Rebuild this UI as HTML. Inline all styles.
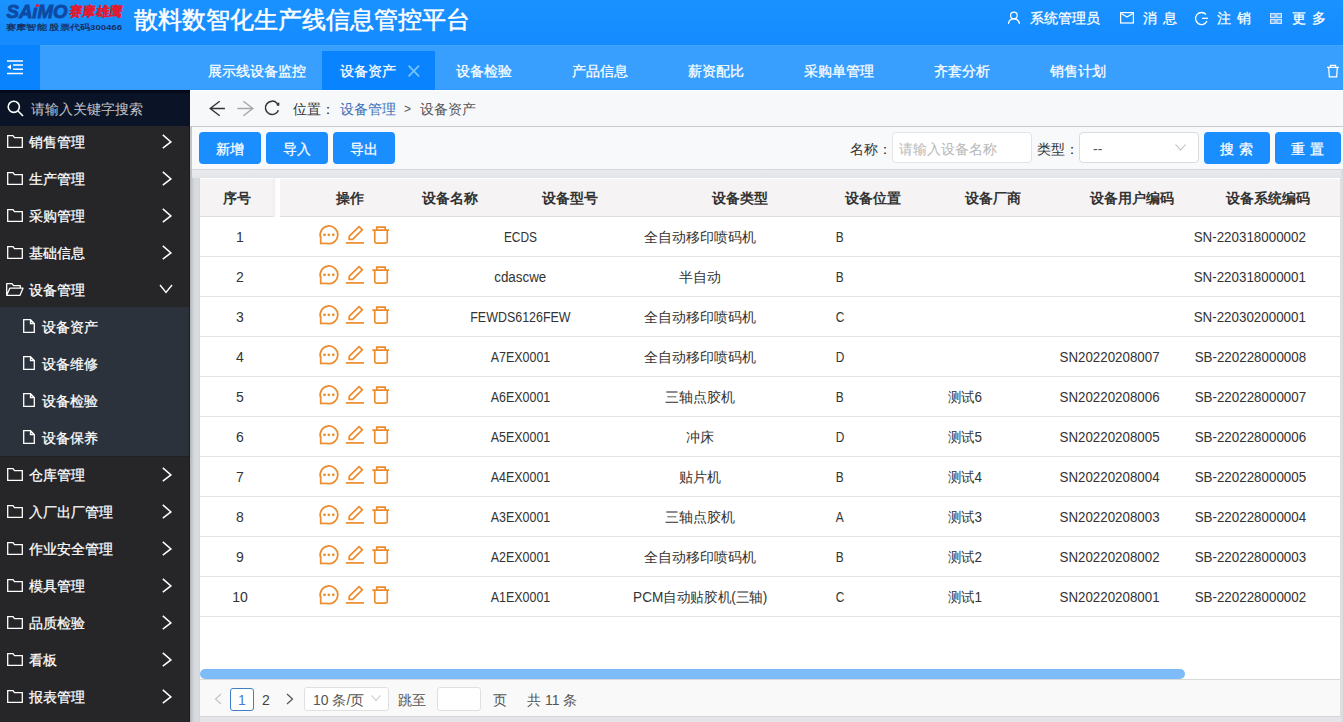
<!DOCTYPE html>
<html><head><meta charset="utf-8"><style>
*{box-sizing:border-box;margin:0;padding:0}
html,body{width:1343px;height:722px;overflow:hidden;background:#e4e5e8;font-family:"Liberation Sans",sans-serif;font-size:14px;color:#333}
.a{position:absolute;white-space:nowrap}
svg{position:absolute;overflow:visible}
.w{color:#fff}
.a{-webkit-text-stroke:0.25px currentColor}
.c{text-align:center}
</style></head><body>
<div class="a" style="left:0px;top:0px;width:1343px;height:45px;background:linear-gradient(#1a92ff,#148bff)"></div>
<div class="a" style="left:0px;top:43px;width:1343px;height:1px;background:#1a8cf6"></div>
<svg style="left:0px;top:0px;" width="130" height="35" viewBox="0 0 130 35"><text x="6.5" y="18" textLength="61" lengthAdjust="spacingAndGlyphs" font-family="Liberation Sans" font-weight="bold" font-style="italic" font-size="19" fill="#0d4aa3" stroke="#0d4aa3" stroke-width="0.9">SAıMO</text><circle cx="37.3" cy="5.6" r="1.7" fill="#e3173a"/><text x="69" y="16.3" textLength="53" lengthAdjust="spacingAndGlyphs" font-family="Liberation Sans" font-weight="bold" font-size="13.5" fill="#e01a2e" stroke="#e01a2e" stroke-width="0.15" transform="skewX(-6) translate(1.8 0)">赛摩雄鹰</text><text x="6" y="30" textLength="116" lengthAdjust="spacingAndGlyphs" font-family="Liberation Sans" font-weight="bold" font-size="7.5" fill="#17305f">赛摩智能  股票代码300466</text></svg>
<div class="a" style="left:134px;top:4.5px;line-height:30px;font-size:24px;color:#fff;-webkit-text-stroke:0.5px #fff">散料数智化生产线信息管控平台</div>
<svg style="left:1007px;top:11px;" width="14" height="14" viewBox="0 0 14 14"><circle cx="6.9" cy="4.4" r="3.3" fill="none" stroke="#fff" stroke-width="1.25"/><path d="M1.4 12.8 C1.9 9.6 4.2 7.9 6.9 7.9 C9.6 7.9 11.9 9.6 12.6 12.8" fill="none" stroke="#fff" stroke-width="1.25"/></svg>
<div class="a" style="left:1030px;top:8.0px;line-height:20px;font-size:14px;color:#fff">系统管理员</div>
<svg style="left:1120px;top:11.5px;" width="14" height="12" viewBox="0 0 14 12"><rect x="0.6" y="0.6" width="12.8" height="10.4" fill="none" stroke="#fff" stroke-width="1.2"/><path d="M1.2 1.6 L7 5 L12.8 1.6" fill="none" stroke="#fff" stroke-width="1.2"/></svg>
<div class="a" style="left:1143px;top:8.0px;line-height:20px;font-size:14px;color:#fff;letter-spacing:1px">消 息</div>
<svg style="left:1195px;top:12px;" width="14" height="13" viewBox="0 0 14 13"><path d="M11 2.5 A6 6 0 1 0 12 9" fill="none" stroke="#fff" stroke-width="1.3"/><path d="M7 6.3 H13" stroke="#fff" stroke-width="1.3"/></svg>
<div class="a" style="left:1217px;top:8.0px;line-height:20px;font-size:14px;color:#fff;letter-spacing:1px">注 销</div>
<svg style="left:1270px;top:13px;" width="12" height="11" viewBox="0 0 12 11"><g fill="#5aa8f5" stroke="#d2e7ff" stroke-width="1.2"><rect x="0.6" y="0.6" width="4.6" height="3.9"/><rect x="6.8" y="0.6" width="4.6" height="3.9"/><rect x="0.6" y="6.5" width="4.6" height="3.9"/><rect x="6.8" y="6.5" width="4.6" height="3.9"/></g></svg>
<div class="a" style="left:1292px;top:8.0px;line-height:20px;font-size:14px;color:#fff;letter-spacing:1px">更 多</div>
<div class="a" style="left:0px;top:45px;width:1343px;height:45px;background:#389fff"></div>
<div class="a" style="left:0px;top:45px;width:1343px;height:1px;background:#3fa5ff"></div>
<div class="a" style="left:0px;top:45px;width:40px;height:45px;background:#0a84fe"></div>
<svg style="left:6px;top:60px;" width="18" height="15" viewBox="0 0 18 15"><path d="M1 1 H17 M7 5 H17 M7 9.2 H17 M1 13.6 H17" stroke="#fff" stroke-width="1.5"/><path d="M1 7.1 L5 4.6 V9.6 Z" fill="#fff"/></svg>
<div class="a" style="left:322px;top:51px;width:113px;height:39px;background:#0a83ff"></div>
<div class="a" style="left:40px;top:89px;width:282px;height:1px;background:#3399fa"></div>
<div class="a" style="left:435px;top:89px;width:908px;height:1px;background:#3399fa"></div>
<div class="a" style="left:208px;top:61.0px;line-height:20px;font-size:14px;color:#fff">展示线设备监控</div>
<div class="a" style="left:340px;top:61.0px;line-height:20px;font-size:14px;color:#fff">设备资产</div>
<div class="a" style="left:456px;top:61.0px;line-height:20px;font-size:14px;color:#fff">设备检验</div>
<div class="a" style="left:572px;top:61.0px;line-height:20px;font-size:14px;color:#fff">产品信息</div>
<div class="a" style="left:688px;top:61.0px;line-height:20px;font-size:14px;color:#fff">薪资配比</div>
<div class="a" style="left:804px;top:61.0px;line-height:20px;font-size:14px;color:#fff">采购单管理</div>
<div class="a" style="left:934px;top:61.0px;line-height:20px;font-size:14px;color:#fff">齐套分析</div>
<div class="a" style="left:1050px;top:61.0px;line-height:20px;font-size:14px;color:#fff">销售计划</div>
<svg style="left:408px;top:65px;" width="12" height="12" viewBox="0 0 12 12"><path d="M0.6 0.6 L11 11.4 M11 0.6 L0.6 11.4" stroke="#78c4ff" stroke-width="1.7"/></svg>
<svg style="left:1327px;top:64px;" width="12" height="14" viewBox="0 0 12 14"><path d="M0 3.3 H12 M3.4 3.3 V1.3 H8.6 V3.3 M1.7 3.3 L2.3 12.8 H9.7 L10.3 3.3" fill="none" stroke="#fff" stroke-width="1.25"/></svg>
<div class="a" style="left:0px;top:90px;width:190px;height:632px;background:#262628"></div>
<div class="a" style="left:189px;top:90px;width:1px;height:632px;background:#1c1c1e"></div>
<div class="a" style="left:0px;top:307px;width:189px;height:149px;background:#2c323c"></div>
<div class="a" style="left:0px;top:456px;width:189px;height:1px;background:#1f2127"></div>
<div class="a" style="left:0px;top:90px;width:190px;height:36px;background:#0a1426"></div>
<div class="a" style="left:0px;top:90px;width:190px;height:3px;background:#050b1a"></div>
<svg style="left:7px;top:100px;" width="17" height="17" viewBox="0 0 17 17"><circle cx="6.8" cy="6.8" r="5.6" fill="none" stroke="#fff" stroke-width="1.6"/><path d="M11 11 L16 16" stroke="#fff" stroke-width="1.6"/></svg>
<div class="a" style="left:31px;top:98.5px;line-height:20px;font-size:14px;color:#c3c4cc;-webkit-text-stroke:0">请输入关键字搜索</div>
<svg style="left:7px;top:135.10000000000002px;" width="16" height="13" viewBox="0 0 16 13"><path d="M0.7 0.7 H6 L7.5 2.7 H15.3 V12.3 H0.7 Z" fill="none" stroke="#fff" stroke-width="1.3"/></svg>
<svg style="left:161.5px;top:134.3px;" width="10" height="15" viewBox="0 0 10 15"><path d="M0.8 0.9 L8.9 7.9 L0.8 14.1" fill="none" stroke="#fff" stroke-width="1.5"/></svg>
<div class="a" style="left:29px;top:132.3px;line-height:20px;font-size:14px;color:#fff">销售管理</div>
<svg style="left:7px;top:172.10000000000002px;" width="16" height="13" viewBox="0 0 16 13"><path d="M0.7 0.7 H6 L7.5 2.7 H15.3 V12.3 H0.7 Z" fill="none" stroke="#fff" stroke-width="1.3"/></svg>
<svg style="left:161.5px;top:171.3px;" width="10" height="15" viewBox="0 0 10 15"><path d="M0.8 0.9 L8.9 7.9 L0.8 14.1" fill="none" stroke="#fff" stroke-width="1.5"/></svg>
<div class="a" style="left:29px;top:169.3px;line-height:20px;font-size:14px;color:#fff">生产管理</div>
<svg style="left:7px;top:209.10000000000002px;" width="16" height="13" viewBox="0 0 16 13"><path d="M0.7 0.7 H6 L7.5 2.7 H15.3 V12.3 H0.7 Z" fill="none" stroke="#fff" stroke-width="1.3"/></svg>
<svg style="left:161.5px;top:208.3px;" width="10" height="15" viewBox="0 0 10 15"><path d="M0.8 0.9 L8.9 7.9 L0.8 14.1" fill="none" stroke="#fff" stroke-width="1.5"/></svg>
<div class="a" style="left:29px;top:206.3px;line-height:20px;font-size:14px;color:#fff">采购管理</div>
<svg style="left:7px;top:246.10000000000002px;" width="16" height="13" viewBox="0 0 16 13"><path d="M0.7 0.7 H6 L7.5 2.7 H15.3 V12.3 H0.7 Z" fill="none" stroke="#fff" stroke-width="1.3"/></svg>
<svg style="left:161.5px;top:245.3px;" width="10" height="15" viewBox="0 0 10 15"><path d="M0.8 0.9 L8.9 7.9 L0.8 14.1" fill="none" stroke="#fff" stroke-width="1.5"/></svg>
<div class="a" style="left:29px;top:243.3px;line-height:20px;font-size:14px;color:#fff">基础信息</div>
<svg style="left:6px;top:283.0px;" width="18" height="13" viewBox="0 0 18 13"><path d="M0.7 12.3 V0.7 H6 L7.5 2.7 H14.3 V5.2 M0.7 12.3 L3.8 5.2 H17 L14 12.3 Z" fill="none" stroke="#fff" stroke-width="1.3" stroke-linejoin="round"/></svg>
<svg style="left:159px;top:284.3px;" width="14" height="10" viewBox="0 0 14 10"><path d="M1 1 L7 8.5 L13 1" fill="none" stroke="#fff" stroke-width="1.4"/></svg>
<div class="a" style="left:29px;top:280.3px;line-height:20px;font-size:14px;color:#fff">设备管理</div>
<svg style="left:23px;top:319.0px;" width="12" height="14" viewBox="0 0 12 14"><path d="M0.7 0.7 H7.5 L11.3 4.5 V13.3 H0.7 Z M7.5 0.7 V4.5 H11.3" fill="none" stroke="#fff" stroke-width="1.3"/></svg>
<div class="a" style="left:42px;top:317.3px;line-height:20px;font-size:14px;color:#fff">设备资产</div>
<svg style="left:23px;top:356.0px;" width="12" height="14" viewBox="0 0 12 14"><path d="M0.7 0.7 H7.5 L11.3 4.5 V13.3 H0.7 Z M7.5 0.7 V4.5 H11.3" fill="none" stroke="#fff" stroke-width="1.3"/></svg>
<div class="a" style="left:42px;top:354.3px;line-height:20px;font-size:14px;color:#fff">设备维修</div>
<svg style="left:23px;top:393.0px;" width="12" height="14" viewBox="0 0 12 14"><path d="M0.7 0.7 H7.5 L11.3 4.5 V13.3 H0.7 Z M7.5 0.7 V4.5 H11.3" fill="none" stroke="#fff" stroke-width="1.3"/></svg>
<div class="a" style="left:42px;top:391.3px;line-height:20px;font-size:14px;color:#fff">设备检验</div>
<svg style="left:23px;top:430.0px;" width="12" height="14" viewBox="0 0 12 14"><path d="M0.7 0.7 H7.5 L11.3 4.5 V13.3 H0.7 Z M7.5 0.7 V4.5 H11.3" fill="none" stroke="#fff" stroke-width="1.3"/></svg>
<div class="a" style="left:42px;top:428.3px;line-height:20px;font-size:14px;color:#fff">设备保养</div>
<svg style="left:7px;top:468.1px;" width="16" height="13" viewBox="0 0 16 13"><path d="M0.7 0.7 H6 L7.5 2.7 H15.3 V12.3 H0.7 Z" fill="none" stroke="#fff" stroke-width="1.3"/></svg>
<svg style="left:161.5px;top:467.3px;" width="10" height="15" viewBox="0 0 10 15"><path d="M0.8 0.9 L8.9 7.9 L0.8 14.1" fill="none" stroke="#fff" stroke-width="1.5"/></svg>
<div class="a" style="left:29px;top:465.3px;line-height:20px;font-size:14px;color:#fff">仓库管理</div>
<svg style="left:7px;top:505.1px;" width="16" height="13" viewBox="0 0 16 13"><path d="M0.7 0.7 H6 L7.5 2.7 H15.3 V12.3 H0.7 Z" fill="none" stroke="#fff" stroke-width="1.3"/></svg>
<svg style="left:161.5px;top:504.3px;" width="10" height="15" viewBox="0 0 10 15"><path d="M0.8 0.9 L8.9 7.9 L0.8 14.1" fill="none" stroke="#fff" stroke-width="1.5"/></svg>
<div class="a" style="left:29px;top:502.29999999999995px;line-height:20px;font-size:14px;color:#fff">入厂出厂管理</div>
<svg style="left:7px;top:542.0999999999999px;" width="16" height="13" viewBox="0 0 16 13"><path d="M0.7 0.7 H6 L7.5 2.7 H15.3 V12.3 H0.7 Z" fill="none" stroke="#fff" stroke-width="1.3"/></svg>
<svg style="left:161.5px;top:541.3px;" width="10" height="15" viewBox="0 0 10 15"><path d="M0.8 0.9 L8.9 7.9 L0.8 14.1" fill="none" stroke="#fff" stroke-width="1.5"/></svg>
<div class="a" style="left:29px;top:539.3px;line-height:20px;font-size:14px;color:#fff">作业安全管理</div>
<svg style="left:7px;top:579.0999999999999px;" width="16" height="13" viewBox="0 0 16 13"><path d="M0.7 0.7 H6 L7.5 2.7 H15.3 V12.3 H0.7 Z" fill="none" stroke="#fff" stroke-width="1.3"/></svg>
<svg style="left:161.5px;top:578.3px;" width="10" height="15" viewBox="0 0 10 15"><path d="M0.8 0.9 L8.9 7.9 L0.8 14.1" fill="none" stroke="#fff" stroke-width="1.5"/></svg>
<div class="a" style="left:29px;top:576.3px;line-height:20px;font-size:14px;color:#fff">模具管理</div>
<svg style="left:7px;top:616.0999999999999px;" width="16" height="13" viewBox="0 0 16 13"><path d="M0.7 0.7 H6 L7.5 2.7 H15.3 V12.3 H0.7 Z" fill="none" stroke="#fff" stroke-width="1.3"/></svg>
<svg style="left:161.5px;top:615.3px;" width="10" height="15" viewBox="0 0 10 15"><path d="M0.8 0.9 L8.9 7.9 L0.8 14.1" fill="none" stroke="#fff" stroke-width="1.5"/></svg>
<div class="a" style="left:29px;top:613.3px;line-height:20px;font-size:14px;color:#fff">品质检验</div>
<svg style="left:7px;top:653.0999999999999px;" width="16" height="13" viewBox="0 0 16 13"><path d="M0.7 0.7 H6 L7.5 2.7 H15.3 V12.3 H0.7 Z" fill="none" stroke="#fff" stroke-width="1.3"/></svg>
<svg style="left:161.5px;top:652.3px;" width="10" height="15" viewBox="0 0 10 15"><path d="M0.8 0.9 L8.9 7.9 L0.8 14.1" fill="none" stroke="#fff" stroke-width="1.5"/></svg>
<div class="a" style="left:29px;top:650.3px;line-height:20px;font-size:14px;color:#fff">看板</div>
<svg style="left:7px;top:690.0999999999999px;" width="16" height="13" viewBox="0 0 16 13"><path d="M0.7 0.7 H6 L7.5 2.7 H15.3 V12.3 H0.7 Z" fill="none" stroke="#fff" stroke-width="1.3"/></svg>
<svg style="left:161.5px;top:689.3px;" width="10" height="15" viewBox="0 0 10 15"><path d="M0.8 0.9 L8.9 7.9 L0.8 14.1" fill="none" stroke="#fff" stroke-width="1.5"/></svg>
<div class="a" style="left:29px;top:687.3px;line-height:20px;font-size:14px;color:#fff">报表管理</div>
<div class="a" style="left:190px;top:90px;width:1153px;height:632px;background:#e4e5e8"></div>
<div class="a" style="left:190px;top:90px;width:10px;height:632px;background:linear-gradient(90deg,#b5b6b8 0,#c3c5c8 2px,#d6d9dd 4px,#d9dcdf 9px,#cfd0d2 10px)"></div>
<div class="a" style="left:190px;top:90px;width:1153px;height:36px;background:#f7f8fa"></div>
<div class="a" style="left:190px;top:126px;width:1153px;height:1px;background:#c9cacd"></div>
<div class="a" style="left:190px;top:90px;width:1153px;height:1px;background:#fdfeff"></div>
<svg style="left:209px;top:100px;" width="17" height="17" viewBox="0 0 17 17"><path d="M15.9 8.5 H1.2 M10.7 1.2 L1.2 8.5 L10.7 15.8" fill="none" stroke="#333" stroke-width="1.4"/></svg>
<svg style="left:237px;top:100px;" width="17" height="17" viewBox="0 0 17 17"><path d="M0.4 8.5 H15.8 M6.4 1.2 L15.8 8.5 L6.4 15.8" fill="none" stroke="#a6a6a6" stroke-width="1.4"/></svg>
<svg style="left:264px;top:100px;" width="16" height="16" viewBox="0 0 16 16"><path d="M13.0 3.2 A6.7 6.7 0 1 0 14.41 10.21" fill="none" stroke="#333" stroke-width="1.5"/><path d="M12.4 3.2 L15.3 2.6 L15.3 5.8 L12.9 5.8 Z" fill="#333"/></svg>
<div class="a" style="left:293px;top:99.0px;line-height:20px;font-size:14px;color:#333;-webkit-text-stroke:0">位置：</div>
<div class="a" style="left:340px;top:99.0px;line-height:20px;font-size:14px;color:#3b6fb6;-webkit-text-stroke:0">设备管理</div>
<div class="a" style="left:404px;top:99.0px;line-height:20px;font-size:12px;color:#555;-webkit-text-stroke:0">&gt;</div>
<div class="a" style="left:420px;top:99.0px;line-height:20px;font-size:14px;color:#555;-webkit-text-stroke:0">设备资产</div>
<div class="a" style="left:190px;top:127px;width:1153px;height:42px;background:#c4c5c7"></div>
<div class="a" style="left:192px;top:127px;width:1151px;height:42px;background:#f8f9fb"></div>
<div class="a" style="left:192px;top:169px;width:1151px;height:1px;background:#d5d6d9"></div>
<div class="a" style="left:192px;top:170px;width:1151px;height:8px;background:linear-gradient(#e9eaed,#e3e4e7)"></div>
<div class="a" style="left:200px;top:178px;width:1140px;height:1px;background:#dadada"></div>
<div class="a" style="left:199px;top:132px;width:62px;height:32px;background:#1a8dff;border-radius:4px"></div>
<div class="a c" style="left:199.0px;top:139.0px;width:62px;line-height:20px;font-size:14px;color:#fff">新增</div>
<div class="a" style="left:266px;top:132px;width:62px;height:32px;background:#1a8dff;border-radius:4px"></div>
<div class="a c" style="left:266.0px;top:139.0px;width:62px;line-height:20px;font-size:14px;color:#fff">导入</div>
<div class="a" style="left:333px;top:132px;width:62px;height:32px;background:#1a8dff;border-radius:4px"></div>
<div class="a c" style="left:333.0px;top:139.0px;width:62px;line-height:20px;font-size:14px;color:#fff">导出</div>
<div class="a" style="left:850px;top:139.0px;line-height:20px;font-size:14px;color:#333;-webkit-text-stroke:0">名称：</div>
<div class="a" style="left:892px;top:132px;width:140px;height:31px;background:#fff;border:1px solid #e2e3e6;border-radius:4px"></div>
<div class="a" style="left:899px;top:139.0px;line-height:20px;font-size:14px;color:#b8b8b8;-webkit-text-stroke:0">请输入设备名称</div>
<div class="a" style="left:1037px;top:139.0px;line-height:20px;font-size:14px;color:#333;-webkit-text-stroke:0">类型：</div>
<div class="a" style="left:1079px;top:132px;width:120px;height:31px;background:#fff;border:1px solid #dadbdf;border-radius:4px"></div>
<div class="a" style="left:1093px;top:139.0px;line-height:20px;font-size:14px;color:#555;-webkit-text-stroke:0">--</div>
<svg style="left:1175px;top:144px;" width="11" height="7" viewBox="0 0 11 7"><path d="M0.5 0.5 L5.5 6 L10.5 0.5" fill="none" stroke="#bbb" stroke-width="1.1"/></svg>
<div class="a" style="left:1204px;top:132px;width:66px;height:32px;background:#1a8dff;border-radius:4px"></div>
<div class="a c" style="left:1204.0px;top:139.0px;width:66px;line-height:20px;font-size:14px;color:#fff;letter-spacing:1px">搜 索</div>
<div class="a" style="left:1275px;top:132px;width:66px;height:32px;background:#1a8dff;border-radius:4px"></div>
<div class="a c" style="left:1275.0px;top:139.0px;width:66px;line-height:20px;font-size:14px;color:#fff;letter-spacing:1px">重 置</div>
<div class="a" style="left:200px;top:178px;width:1140px;height:539px;background:#fff"></div>
<div class="a" style="left:1340px;top:178px;width:1px;height:539px;background:#dedede"></div>
<div class="a" style="left:1341px;top:170px;width:2px;height:552px;background:#dcdde0"></div>
<div class="a" style="left:200px;top:179px;width:1140px;height:37px;background:#f5f3f3"></div>
<div class="a" style="left:200px;top:216px;width:1141px;height:1px;background:#dddddd"></div>
<div class="a" style="left:273px;top:178px;width:7px;height:39px;background:linear-gradient(90deg,#e9e9e9,#fdfdfd 3px,#fff)"></div>
<div class="a c" style="left:87.0px;top:188.0px;width:300px;line-height:20px;font-size:14px;font-weight:bold;color:#333;-webkit-text-stroke:0">序号</div>
<div class="a c" style="left:199.5px;top:188.0px;width:300px;line-height:20px;font-size:14px;font-weight:bold;color:#333;-webkit-text-stroke:0">操作</div>
<div class="a c" style="left:300.0px;top:188.0px;width:300px;line-height:20px;font-size:14px;font-weight:bold;color:#333;-webkit-text-stroke:0">设备名称</div>
<div class="a c" style="left:420.0px;top:188.0px;width:300px;line-height:20px;font-size:14px;font-weight:bold;color:#333;-webkit-text-stroke:0">设备型号</div>
<div class="a c" style="left:589.5px;top:188.0px;width:300px;line-height:20px;font-size:14px;font-weight:bold;color:#333;-webkit-text-stroke:0">设备类型</div>
<div class="a c" style="left:723.0px;top:188.0px;width:300px;line-height:20px;font-size:14px;font-weight:bold;color:#333;-webkit-text-stroke:0">设备位置</div>
<div class="a c" style="left:843.0px;top:188.0px;width:300px;line-height:20px;font-size:14px;font-weight:bold;color:#333;-webkit-text-stroke:0">设备厂商</div>
<div class="a c" style="left:981.7px;top:188.0px;width:300px;line-height:20px;font-size:14px;font-weight:bold;color:#333;-webkit-text-stroke:0">设备用户编码</div>
<div class="a c" style="left:1118.0px;top:188.0px;width:300px;line-height:20px;font-size:14px;font-weight:bold;color:#333;-webkit-text-stroke:0">设备系统编码</div>
<div class="a" style="left:200px;top:256px;width:1141px;height:1px;background:#e3e3e3"></div>
<div class="a c" style="left:90.0px;top:227.0px;width:300px;line-height:20px;font-size:14px;color:#333;-webkit-text-stroke:0">1</div>
<svg style="left:317px;top:223px;" width="24" height="24" viewBox="0 0 24 24"><path d="M3.73 14.8 A8.8 8.8 0 1 1 9.72 20.3 L3.7 20.5 Z" fill="none" stroke="#ed8c2c" stroke-width="1.75" stroke-linejoin="round"/><circle cx="7.5" cy="11.8" r="1.4" fill="#ed8c2c"/><circle cx="11.8" cy="11.8" r="1.4" fill="#ed8c2c"/><circle cx="16.3" cy="11.8" r="1.4" fill="#ed8c2c"/></svg>
<svg style="left:344px;top:223px;" width="22" height="22" viewBox="0 0 22 22"><path d="M5.3 13.1 L15.1 3.6 L18.3 6.8 L8.6 16.3 L5.1 16.4 Z" fill="none" stroke="#ed8c2c" stroke-width="1.7" stroke-linejoin="round"/><path d="M1.9 19.9 H20" stroke="#ed8c2c" stroke-width="1.7"/></svg>
<svg style="left:370px;top:223px;" width="22" height="22" viewBox="0 0 22 22"><path d="M2.3 7.1 H19.1" stroke="#ed8c2c" stroke-width="1.75"/><path d="M6.75 7.1 V4.1 H15.15 V7.1" fill="none" stroke="#ed8c2c" stroke-width="1.7"/><path d="M4.75 7.1 V18.6 Q4.75 20.1 6.3 20.1 H15.7 Q17.25 20.1 17.25 18.6 V7.1" fill="none" stroke="#ed8c2c" stroke-width="1.7"/></svg>
<div class="a c" style="left:370.0px;top:227.0px;width:300px;line-height:20px;font-size:14px;color:#333;-webkit-text-stroke:0"><span style="display:inline-block;transform:scaleX(0.85)">ECDS</span></div>
<div class="a c" style="left:550.0px;top:227.0px;width:300px;line-height:20px;font-size:14px;color:#333;-webkit-text-stroke:0">全自动移印喷码机</div>
<div class="a c" style="left:690.0px;top:227.0px;width:300px;line-height:20px;font-size:14px;color:#333;-webkit-text-stroke:0"><span style="display:inline-block;transform:scaleX(0.85)">B</span></div>
<div class="a c" style="left:1100.0px;top:227.0px;width:300px;line-height:20px;font-size:14px;color:#333;-webkit-text-stroke:0"><span style="display:inline-block;transform:scaleX(0.955)">SN-220318000002</span></div>
<div class="a" style="left:200px;top:296px;width:1141px;height:1px;background:#e3e3e3"></div>
<div class="a c" style="left:90.0px;top:267.0px;width:300px;line-height:20px;font-size:14px;color:#333;-webkit-text-stroke:0">2</div>
<svg style="left:317px;top:263px;" width="24" height="24" viewBox="0 0 24 24"><path d="M3.73 14.8 A8.8 8.8 0 1 1 9.72 20.3 L3.7 20.5 Z" fill="none" stroke="#ed8c2c" stroke-width="1.75" stroke-linejoin="round"/><circle cx="7.5" cy="11.8" r="1.4" fill="#ed8c2c"/><circle cx="11.8" cy="11.8" r="1.4" fill="#ed8c2c"/><circle cx="16.3" cy="11.8" r="1.4" fill="#ed8c2c"/></svg>
<svg style="left:344px;top:263px;" width="22" height="22" viewBox="0 0 22 22"><path d="M5.3 13.1 L15.1 3.6 L18.3 6.8 L8.6 16.3 L5.1 16.4 Z" fill="none" stroke="#ed8c2c" stroke-width="1.7" stroke-linejoin="round"/><path d="M1.9 19.9 H20" stroke="#ed8c2c" stroke-width="1.7"/></svg>
<svg style="left:370px;top:263px;" width="22" height="22" viewBox="0 0 22 22"><path d="M2.3 7.1 H19.1" stroke="#ed8c2c" stroke-width="1.75"/><path d="M6.75 7.1 V4.1 H15.15 V7.1" fill="none" stroke="#ed8c2c" stroke-width="1.7"/><path d="M4.75 7.1 V18.6 Q4.75 20.1 6.3 20.1 H15.7 Q17.25 20.1 17.25 18.6 V7.1" fill="none" stroke="#ed8c2c" stroke-width="1.7"/></svg>
<div class="a c" style="left:370.0px;top:267.0px;width:300px;line-height:20px;font-size:14px;color:#333;-webkit-text-stroke:0"><span style="display:inline-block;transform:scaleX(0.955)">cdascwe</span></div>
<div class="a c" style="left:550.0px;top:267.0px;width:300px;line-height:20px;font-size:14px;color:#333;-webkit-text-stroke:0">半自动</div>
<div class="a c" style="left:690.0px;top:267.0px;width:300px;line-height:20px;font-size:14px;color:#333;-webkit-text-stroke:0"><span style="display:inline-block;transform:scaleX(0.85)">B</span></div>
<div class="a c" style="left:1100.0px;top:267.0px;width:300px;line-height:20px;font-size:14px;color:#333;-webkit-text-stroke:0"><span style="display:inline-block;transform:scaleX(0.955)">SN-220318000001</span></div>
<div class="a" style="left:200px;top:336px;width:1141px;height:1px;background:#e3e3e3"></div>
<div class="a c" style="left:90.0px;top:307.0px;width:300px;line-height:20px;font-size:14px;color:#333;-webkit-text-stroke:0">3</div>
<svg style="left:317px;top:303px;" width="24" height="24" viewBox="0 0 24 24"><path d="M3.73 14.8 A8.8 8.8 0 1 1 9.72 20.3 L3.7 20.5 Z" fill="none" stroke="#ed8c2c" stroke-width="1.75" stroke-linejoin="round"/><circle cx="7.5" cy="11.8" r="1.4" fill="#ed8c2c"/><circle cx="11.8" cy="11.8" r="1.4" fill="#ed8c2c"/><circle cx="16.3" cy="11.8" r="1.4" fill="#ed8c2c"/></svg>
<svg style="left:344px;top:303px;" width="22" height="22" viewBox="0 0 22 22"><path d="M5.3 13.1 L15.1 3.6 L18.3 6.8 L8.6 16.3 L5.1 16.4 Z" fill="none" stroke="#ed8c2c" stroke-width="1.7" stroke-linejoin="round"/><path d="M1.9 19.9 H20" stroke="#ed8c2c" stroke-width="1.7"/></svg>
<svg style="left:370px;top:303px;" width="22" height="22" viewBox="0 0 22 22"><path d="M2.3 7.1 H19.1" stroke="#ed8c2c" stroke-width="1.75"/><path d="M6.75 7.1 V4.1 H15.15 V7.1" fill="none" stroke="#ed8c2c" stroke-width="1.7"/><path d="M4.75 7.1 V18.6 Q4.75 20.1 6.3 20.1 H15.7 Q17.25 20.1 17.25 18.6 V7.1" fill="none" stroke="#ed8c2c" stroke-width="1.7"/></svg>
<div class="a c" style="left:370.0px;top:307.0px;width:300px;line-height:20px;font-size:14px;color:#333;-webkit-text-stroke:0"><span style="display:inline-block;transform:scaleX(0.89)">FEWDS6126FEW</span></div>
<div class="a c" style="left:550.0px;top:307.0px;width:300px;line-height:20px;font-size:14px;color:#333;-webkit-text-stroke:0">全自动移印喷码机</div>
<div class="a c" style="left:690.0px;top:307.0px;width:300px;line-height:20px;font-size:14px;color:#333;-webkit-text-stroke:0"><span style="display:inline-block;transform:scaleX(0.85)">C</span></div>
<div class="a c" style="left:1100.0px;top:307.0px;width:300px;line-height:20px;font-size:14px;color:#333;-webkit-text-stroke:0"><span style="display:inline-block;transform:scaleX(0.955)">SN-220302000001</span></div>
<div class="a" style="left:200px;top:376px;width:1141px;height:1px;background:#e3e3e3"></div>
<div class="a c" style="left:90.0px;top:347.0px;width:300px;line-height:20px;font-size:14px;color:#333;-webkit-text-stroke:0">4</div>
<svg style="left:317px;top:343px;" width="24" height="24" viewBox="0 0 24 24"><path d="M3.73 14.8 A8.8 8.8 0 1 1 9.72 20.3 L3.7 20.5 Z" fill="none" stroke="#ed8c2c" stroke-width="1.75" stroke-linejoin="round"/><circle cx="7.5" cy="11.8" r="1.4" fill="#ed8c2c"/><circle cx="11.8" cy="11.8" r="1.4" fill="#ed8c2c"/><circle cx="16.3" cy="11.8" r="1.4" fill="#ed8c2c"/></svg>
<svg style="left:344px;top:343px;" width="22" height="22" viewBox="0 0 22 22"><path d="M5.3 13.1 L15.1 3.6 L18.3 6.8 L8.6 16.3 L5.1 16.4 Z" fill="none" stroke="#ed8c2c" stroke-width="1.7" stroke-linejoin="round"/><path d="M1.9 19.9 H20" stroke="#ed8c2c" stroke-width="1.7"/></svg>
<svg style="left:370px;top:343px;" width="22" height="22" viewBox="0 0 22 22"><path d="M2.3 7.1 H19.1" stroke="#ed8c2c" stroke-width="1.75"/><path d="M6.75 7.1 V4.1 H15.15 V7.1" fill="none" stroke="#ed8c2c" stroke-width="1.7"/><path d="M4.75 7.1 V18.6 Q4.75 20.1 6.3 20.1 H15.7 Q17.25 20.1 17.25 18.6 V7.1" fill="none" stroke="#ed8c2c" stroke-width="1.7"/></svg>
<div class="a c" style="left:370.0px;top:347.0px;width:300px;line-height:20px;font-size:14px;color:#333;-webkit-text-stroke:0"><span style="display:inline-block;transform:scaleX(0.89)">A7EX0001</span></div>
<div class="a c" style="left:550.0px;top:347.0px;width:300px;line-height:20px;font-size:14px;color:#333;-webkit-text-stroke:0">全自动移印喷码机</div>
<div class="a c" style="left:690.0px;top:347.0px;width:300px;line-height:20px;font-size:14px;color:#333;-webkit-text-stroke:0"><span style="display:inline-block;transform:scaleX(0.85)">D</span></div>
<div class="a c" style="left:960.0px;top:347.0px;width:300px;line-height:20px;font-size:14px;color:#333;-webkit-text-stroke:0"><span style="display:inline-block;transform:scaleX(0.952)">SN20220208007</span></div>
<div class="a c" style="left:1100.0px;top:347.0px;width:300px;line-height:20px;font-size:14px;color:#333;-webkit-text-stroke:0"><span style="display:inline-block;transform:scaleX(0.955)">SB-220228000008</span></div>
<div class="a" style="left:200px;top:416px;width:1141px;height:1px;background:#e3e3e3"></div>
<div class="a c" style="left:90.0px;top:387.0px;width:300px;line-height:20px;font-size:14px;color:#333;-webkit-text-stroke:0">5</div>
<svg style="left:317px;top:383px;" width="24" height="24" viewBox="0 0 24 24"><path d="M3.73 14.8 A8.8 8.8 0 1 1 9.72 20.3 L3.7 20.5 Z" fill="none" stroke="#ed8c2c" stroke-width="1.75" stroke-linejoin="round"/><circle cx="7.5" cy="11.8" r="1.4" fill="#ed8c2c"/><circle cx="11.8" cy="11.8" r="1.4" fill="#ed8c2c"/><circle cx="16.3" cy="11.8" r="1.4" fill="#ed8c2c"/></svg>
<svg style="left:344px;top:383px;" width="22" height="22" viewBox="0 0 22 22"><path d="M5.3 13.1 L15.1 3.6 L18.3 6.8 L8.6 16.3 L5.1 16.4 Z" fill="none" stroke="#ed8c2c" stroke-width="1.7" stroke-linejoin="round"/><path d="M1.9 19.9 H20" stroke="#ed8c2c" stroke-width="1.7"/></svg>
<svg style="left:370px;top:383px;" width="22" height="22" viewBox="0 0 22 22"><path d="M2.3 7.1 H19.1" stroke="#ed8c2c" stroke-width="1.75"/><path d="M6.75 7.1 V4.1 H15.15 V7.1" fill="none" stroke="#ed8c2c" stroke-width="1.7"/><path d="M4.75 7.1 V18.6 Q4.75 20.1 6.3 20.1 H15.7 Q17.25 20.1 17.25 18.6 V7.1" fill="none" stroke="#ed8c2c" stroke-width="1.7"/></svg>
<div class="a c" style="left:370.0px;top:387.0px;width:300px;line-height:20px;font-size:14px;color:#333;-webkit-text-stroke:0"><span style="display:inline-block;transform:scaleX(0.89)">A6EX0001</span></div>
<div class="a c" style="left:550.0px;top:387.0px;width:300px;line-height:20px;font-size:14px;color:#333;-webkit-text-stroke:0">三轴点胶机</div>
<div class="a c" style="left:690.0px;top:387.0px;width:300px;line-height:20px;font-size:14px;color:#333;-webkit-text-stroke:0"><span style="display:inline-block;transform:scaleX(0.85)">B</span></div>
<div class="a c" style="left:815.0px;top:387.0px;width:300px;line-height:20px;font-size:14px;color:#333;-webkit-text-stroke:0"><span style="display:inline-block;transform:scaleX(0.96)">测试6</span></div>
<div class="a c" style="left:960.0px;top:387.0px;width:300px;line-height:20px;font-size:14px;color:#333;-webkit-text-stroke:0"><span style="display:inline-block;transform:scaleX(0.952)">SN20220208006</span></div>
<div class="a c" style="left:1100.0px;top:387.0px;width:300px;line-height:20px;font-size:14px;color:#333;-webkit-text-stroke:0"><span style="display:inline-block;transform:scaleX(0.955)">SB-220228000007</span></div>
<div class="a" style="left:200px;top:456px;width:1141px;height:1px;background:#e3e3e3"></div>
<div class="a c" style="left:90.0px;top:427.0px;width:300px;line-height:20px;font-size:14px;color:#333;-webkit-text-stroke:0">6</div>
<svg style="left:317px;top:423px;" width="24" height="24" viewBox="0 0 24 24"><path d="M3.73 14.8 A8.8 8.8 0 1 1 9.72 20.3 L3.7 20.5 Z" fill="none" stroke="#ed8c2c" stroke-width="1.75" stroke-linejoin="round"/><circle cx="7.5" cy="11.8" r="1.4" fill="#ed8c2c"/><circle cx="11.8" cy="11.8" r="1.4" fill="#ed8c2c"/><circle cx="16.3" cy="11.8" r="1.4" fill="#ed8c2c"/></svg>
<svg style="left:344px;top:423px;" width="22" height="22" viewBox="0 0 22 22"><path d="M5.3 13.1 L15.1 3.6 L18.3 6.8 L8.6 16.3 L5.1 16.4 Z" fill="none" stroke="#ed8c2c" stroke-width="1.7" stroke-linejoin="round"/><path d="M1.9 19.9 H20" stroke="#ed8c2c" stroke-width="1.7"/></svg>
<svg style="left:370px;top:423px;" width="22" height="22" viewBox="0 0 22 22"><path d="M2.3 7.1 H19.1" stroke="#ed8c2c" stroke-width="1.75"/><path d="M6.75 7.1 V4.1 H15.15 V7.1" fill="none" stroke="#ed8c2c" stroke-width="1.7"/><path d="M4.75 7.1 V18.6 Q4.75 20.1 6.3 20.1 H15.7 Q17.25 20.1 17.25 18.6 V7.1" fill="none" stroke="#ed8c2c" stroke-width="1.7"/></svg>
<div class="a c" style="left:370.0px;top:427.0px;width:300px;line-height:20px;font-size:14px;color:#333;-webkit-text-stroke:0"><span style="display:inline-block;transform:scaleX(0.89)">A5EX0001</span></div>
<div class="a c" style="left:550.0px;top:427.0px;width:300px;line-height:20px;font-size:14px;color:#333;-webkit-text-stroke:0">冲床</div>
<div class="a c" style="left:690.0px;top:427.0px;width:300px;line-height:20px;font-size:14px;color:#333;-webkit-text-stroke:0"><span style="display:inline-block;transform:scaleX(0.85)">D</span></div>
<div class="a c" style="left:815.0px;top:427.0px;width:300px;line-height:20px;font-size:14px;color:#333;-webkit-text-stroke:0"><span style="display:inline-block;transform:scaleX(0.96)">测试5</span></div>
<div class="a c" style="left:960.0px;top:427.0px;width:300px;line-height:20px;font-size:14px;color:#333;-webkit-text-stroke:0"><span style="display:inline-block;transform:scaleX(0.952)">SN20220208005</span></div>
<div class="a c" style="left:1100.0px;top:427.0px;width:300px;line-height:20px;font-size:14px;color:#333;-webkit-text-stroke:0"><span style="display:inline-block;transform:scaleX(0.955)">SB-220228000006</span></div>
<div class="a" style="left:200px;top:496px;width:1141px;height:1px;background:#e3e3e3"></div>
<div class="a c" style="left:90.0px;top:467.0px;width:300px;line-height:20px;font-size:14px;color:#333;-webkit-text-stroke:0">7</div>
<svg style="left:317px;top:463px;" width="24" height="24" viewBox="0 0 24 24"><path d="M3.73 14.8 A8.8 8.8 0 1 1 9.72 20.3 L3.7 20.5 Z" fill="none" stroke="#ed8c2c" stroke-width="1.75" stroke-linejoin="round"/><circle cx="7.5" cy="11.8" r="1.4" fill="#ed8c2c"/><circle cx="11.8" cy="11.8" r="1.4" fill="#ed8c2c"/><circle cx="16.3" cy="11.8" r="1.4" fill="#ed8c2c"/></svg>
<svg style="left:344px;top:463px;" width="22" height="22" viewBox="0 0 22 22"><path d="M5.3 13.1 L15.1 3.6 L18.3 6.8 L8.6 16.3 L5.1 16.4 Z" fill="none" stroke="#ed8c2c" stroke-width="1.7" stroke-linejoin="round"/><path d="M1.9 19.9 H20" stroke="#ed8c2c" stroke-width="1.7"/></svg>
<svg style="left:370px;top:463px;" width="22" height="22" viewBox="0 0 22 22"><path d="M2.3 7.1 H19.1" stroke="#ed8c2c" stroke-width="1.75"/><path d="M6.75 7.1 V4.1 H15.15 V7.1" fill="none" stroke="#ed8c2c" stroke-width="1.7"/><path d="M4.75 7.1 V18.6 Q4.75 20.1 6.3 20.1 H15.7 Q17.25 20.1 17.25 18.6 V7.1" fill="none" stroke="#ed8c2c" stroke-width="1.7"/></svg>
<div class="a c" style="left:370.0px;top:467.0px;width:300px;line-height:20px;font-size:14px;color:#333;-webkit-text-stroke:0"><span style="display:inline-block;transform:scaleX(0.89)">A4EX0001</span></div>
<div class="a c" style="left:550.0px;top:467.0px;width:300px;line-height:20px;font-size:14px;color:#333;-webkit-text-stroke:0">贴片机</div>
<div class="a c" style="left:690.0px;top:467.0px;width:300px;line-height:20px;font-size:14px;color:#333;-webkit-text-stroke:0"><span style="display:inline-block;transform:scaleX(0.85)">B</span></div>
<div class="a c" style="left:815.0px;top:467.0px;width:300px;line-height:20px;font-size:14px;color:#333;-webkit-text-stroke:0"><span style="display:inline-block;transform:scaleX(0.96)">测试4</span></div>
<div class="a c" style="left:960.0px;top:467.0px;width:300px;line-height:20px;font-size:14px;color:#333;-webkit-text-stroke:0"><span style="display:inline-block;transform:scaleX(0.952)">SN20220208004</span></div>
<div class="a c" style="left:1100.0px;top:467.0px;width:300px;line-height:20px;font-size:14px;color:#333;-webkit-text-stroke:0"><span style="display:inline-block;transform:scaleX(0.955)">SB-220228000005</span></div>
<div class="a" style="left:200px;top:536px;width:1141px;height:1px;background:#e3e3e3"></div>
<div class="a c" style="left:90.0px;top:507.0px;width:300px;line-height:20px;font-size:14px;color:#333;-webkit-text-stroke:0">8</div>
<svg style="left:317px;top:503px;" width="24" height="24" viewBox="0 0 24 24"><path d="M3.73 14.8 A8.8 8.8 0 1 1 9.72 20.3 L3.7 20.5 Z" fill="none" stroke="#ed8c2c" stroke-width="1.75" stroke-linejoin="round"/><circle cx="7.5" cy="11.8" r="1.4" fill="#ed8c2c"/><circle cx="11.8" cy="11.8" r="1.4" fill="#ed8c2c"/><circle cx="16.3" cy="11.8" r="1.4" fill="#ed8c2c"/></svg>
<svg style="left:344px;top:503px;" width="22" height="22" viewBox="0 0 22 22"><path d="M5.3 13.1 L15.1 3.6 L18.3 6.8 L8.6 16.3 L5.1 16.4 Z" fill="none" stroke="#ed8c2c" stroke-width="1.7" stroke-linejoin="round"/><path d="M1.9 19.9 H20" stroke="#ed8c2c" stroke-width="1.7"/></svg>
<svg style="left:370px;top:503px;" width="22" height="22" viewBox="0 0 22 22"><path d="M2.3 7.1 H19.1" stroke="#ed8c2c" stroke-width="1.75"/><path d="M6.75 7.1 V4.1 H15.15 V7.1" fill="none" stroke="#ed8c2c" stroke-width="1.7"/><path d="M4.75 7.1 V18.6 Q4.75 20.1 6.3 20.1 H15.7 Q17.25 20.1 17.25 18.6 V7.1" fill="none" stroke="#ed8c2c" stroke-width="1.7"/></svg>
<div class="a c" style="left:370.0px;top:507.0px;width:300px;line-height:20px;font-size:14px;color:#333;-webkit-text-stroke:0"><span style="display:inline-block;transform:scaleX(0.89)">A3EX0001</span></div>
<div class="a c" style="left:550.0px;top:507.0px;width:300px;line-height:20px;font-size:14px;color:#333;-webkit-text-stroke:0">三轴点胶机</div>
<div class="a c" style="left:690.0px;top:507.0px;width:300px;line-height:20px;font-size:14px;color:#333;-webkit-text-stroke:0"><span style="display:inline-block;transform:scaleX(0.85)">A</span></div>
<div class="a c" style="left:815.0px;top:507.0px;width:300px;line-height:20px;font-size:14px;color:#333;-webkit-text-stroke:0"><span style="display:inline-block;transform:scaleX(0.96)">测试3</span></div>
<div class="a c" style="left:960.0px;top:507.0px;width:300px;line-height:20px;font-size:14px;color:#333;-webkit-text-stroke:0"><span style="display:inline-block;transform:scaleX(0.952)">SN20220208003</span></div>
<div class="a c" style="left:1100.0px;top:507.0px;width:300px;line-height:20px;font-size:14px;color:#333;-webkit-text-stroke:0"><span style="display:inline-block;transform:scaleX(0.955)">SB-220228000004</span></div>
<div class="a" style="left:200px;top:576px;width:1141px;height:1px;background:#e3e3e3"></div>
<div class="a c" style="left:90.0px;top:547.0px;width:300px;line-height:20px;font-size:14px;color:#333;-webkit-text-stroke:0">9</div>
<svg style="left:317px;top:543px;" width="24" height="24" viewBox="0 0 24 24"><path d="M3.73 14.8 A8.8 8.8 0 1 1 9.72 20.3 L3.7 20.5 Z" fill="none" stroke="#ed8c2c" stroke-width="1.75" stroke-linejoin="round"/><circle cx="7.5" cy="11.8" r="1.4" fill="#ed8c2c"/><circle cx="11.8" cy="11.8" r="1.4" fill="#ed8c2c"/><circle cx="16.3" cy="11.8" r="1.4" fill="#ed8c2c"/></svg>
<svg style="left:344px;top:543px;" width="22" height="22" viewBox="0 0 22 22"><path d="M5.3 13.1 L15.1 3.6 L18.3 6.8 L8.6 16.3 L5.1 16.4 Z" fill="none" stroke="#ed8c2c" stroke-width="1.7" stroke-linejoin="round"/><path d="M1.9 19.9 H20" stroke="#ed8c2c" stroke-width="1.7"/></svg>
<svg style="left:370px;top:543px;" width="22" height="22" viewBox="0 0 22 22"><path d="M2.3 7.1 H19.1" stroke="#ed8c2c" stroke-width="1.75"/><path d="M6.75 7.1 V4.1 H15.15 V7.1" fill="none" stroke="#ed8c2c" stroke-width="1.7"/><path d="M4.75 7.1 V18.6 Q4.75 20.1 6.3 20.1 H15.7 Q17.25 20.1 17.25 18.6 V7.1" fill="none" stroke="#ed8c2c" stroke-width="1.7"/></svg>
<div class="a c" style="left:370.0px;top:547.0px;width:300px;line-height:20px;font-size:14px;color:#333;-webkit-text-stroke:0"><span style="display:inline-block;transform:scaleX(0.89)">A2EX0001</span></div>
<div class="a c" style="left:550.0px;top:547.0px;width:300px;line-height:20px;font-size:14px;color:#333;-webkit-text-stroke:0">全自动移印喷码机</div>
<div class="a c" style="left:690.0px;top:547.0px;width:300px;line-height:20px;font-size:14px;color:#333;-webkit-text-stroke:0"><span style="display:inline-block;transform:scaleX(0.85)">B</span></div>
<div class="a c" style="left:815.0px;top:547.0px;width:300px;line-height:20px;font-size:14px;color:#333;-webkit-text-stroke:0"><span style="display:inline-block;transform:scaleX(0.96)">测试2</span></div>
<div class="a c" style="left:960.0px;top:547.0px;width:300px;line-height:20px;font-size:14px;color:#333;-webkit-text-stroke:0"><span style="display:inline-block;transform:scaleX(0.952)">SN20220208002</span></div>
<div class="a c" style="left:1100.0px;top:547.0px;width:300px;line-height:20px;font-size:14px;color:#333;-webkit-text-stroke:0"><span style="display:inline-block;transform:scaleX(0.955)">SB-220228000003</span></div>
<div class="a" style="left:200px;top:616px;width:1141px;height:1px;background:#e3e3e3"></div>
<div class="a c" style="left:90.0px;top:587.0px;width:300px;line-height:20px;font-size:14px;color:#333;-webkit-text-stroke:0">10</div>
<svg style="left:317px;top:583px;" width="24" height="24" viewBox="0 0 24 24"><path d="M3.73 14.8 A8.8 8.8 0 1 1 9.72 20.3 L3.7 20.5 Z" fill="none" stroke="#ed8c2c" stroke-width="1.75" stroke-linejoin="round"/><circle cx="7.5" cy="11.8" r="1.4" fill="#ed8c2c"/><circle cx="11.8" cy="11.8" r="1.4" fill="#ed8c2c"/><circle cx="16.3" cy="11.8" r="1.4" fill="#ed8c2c"/></svg>
<svg style="left:344px;top:583px;" width="22" height="22" viewBox="0 0 22 22"><path d="M5.3 13.1 L15.1 3.6 L18.3 6.8 L8.6 16.3 L5.1 16.4 Z" fill="none" stroke="#ed8c2c" stroke-width="1.7" stroke-linejoin="round"/><path d="M1.9 19.9 H20" stroke="#ed8c2c" stroke-width="1.7"/></svg>
<svg style="left:370px;top:583px;" width="22" height="22" viewBox="0 0 22 22"><path d="M2.3 7.1 H19.1" stroke="#ed8c2c" stroke-width="1.75"/><path d="M6.75 7.1 V4.1 H15.15 V7.1" fill="none" stroke="#ed8c2c" stroke-width="1.7"/><path d="M4.75 7.1 V18.6 Q4.75 20.1 6.3 20.1 H15.7 Q17.25 20.1 17.25 18.6 V7.1" fill="none" stroke="#ed8c2c" stroke-width="1.7"/></svg>
<div class="a c" style="left:370.0px;top:587.0px;width:300px;line-height:20px;font-size:14px;color:#333;-webkit-text-stroke:0"><span style="display:inline-block;transform:scaleX(0.89)">A1EX0001</span></div>
<div class="a c" style="left:550.0px;top:587.0px;width:300px;line-height:20px;font-size:14px;color:#333;-webkit-text-stroke:0"><span style="display:inline-block;transform:scaleX(0.97)">PCM自动贴胶机(三轴)</span></div>
<div class="a c" style="left:690.0px;top:587.0px;width:300px;line-height:20px;font-size:14px;color:#333;-webkit-text-stroke:0"><span style="display:inline-block;transform:scaleX(0.85)">C</span></div>
<div class="a c" style="left:815.0px;top:587.0px;width:300px;line-height:20px;font-size:14px;color:#333;-webkit-text-stroke:0"><span style="display:inline-block;transform:scaleX(0.96)">测试1</span></div>
<div class="a c" style="left:960.0px;top:587.0px;width:300px;line-height:20px;font-size:14px;color:#333;-webkit-text-stroke:0"><span style="display:inline-block;transform:scaleX(0.952)">SN20220208001</span></div>
<div class="a c" style="left:1100.0px;top:587.0px;width:300px;line-height:20px;font-size:14px;color:#333;-webkit-text-stroke:0"><span style="display:inline-block;transform:scaleX(0.955)">SB-220228000002</span></div>
<div class="a" style="left:200px;top:669px;width:985px;height:10px;background:#7dbcf8;border-radius:5px"></div>
<div class="a" style="left:200px;top:679px;width:1140px;height:38px;background:#f9f9f9;border-top:1px solid #d9d9d9;border-bottom:1px solid #d6d6d6"></div>
<svg style="left:214px;top:693px;" width="8" height="12" viewBox="0 0 8 12"><path d="M7 1 L1.5 6 L7 11" fill="none" stroke="#c5c5c5" stroke-width="1.2"/></svg>
<div class="a" style="left:230px;top:687.5px;width:24px;height:23.5px;border:1px solid #3f7fca;border-radius:3px;background:#fff"></div>
<div class="a c" style="left:230.0px;top:690.0px;width:24px;line-height:20px;font-size:14px;color:#4a7ad9;-webkit-text-stroke:0">1</div>
<div class="a c" style="left:256.0px;top:690.0px;width:20px;line-height:20px;font-size:14px;color:#444;-webkit-text-stroke:0">2</div>
<svg style="left:286px;top:693px;" width="8" height="12" viewBox="0 0 8 12"><path d="M1 1 L6.5 6 L1 11" fill="none" stroke="#555" stroke-width="1.2"/></svg>
<div class="a" style="left:304px;top:687px;width:85px;height:24px;border:1px solid #e0e0e0;border-radius:3px;background:#fff"></div>
<div class="a" style="left:313px;top:690.0px;line-height:20px;font-size:14px;color:#555;-webkit-text-stroke:0">10 条/页</div>
<svg style="left:371px;top:695px;" width="10" height="6" viewBox="0 0 10 6"><path d="M0.5 0.5 L5 5.5 L9.5 0.5" fill="none" stroke="#c5c5c5" stroke-width="1.1"/></svg>
<div class="a" style="left:398px;top:690.0px;line-height:20px;font-size:14px;color:#555;-webkit-text-stroke:0">跳至</div>
<div class="a" style="left:437px;top:687px;width:44px;height:24px;border:1px solid #e0e0e0;border-radius:3px;background:#fff"></div>
<div class="a" style="left:493px;top:690.0px;line-height:20px;font-size:14px;color:#555;-webkit-text-stroke:0">页</div>
<div class="a" style="left:527px;top:690.0px;line-height:20px;font-size:14px;color:#555;-webkit-text-stroke:0">共 11 条</div>
</body></html>
